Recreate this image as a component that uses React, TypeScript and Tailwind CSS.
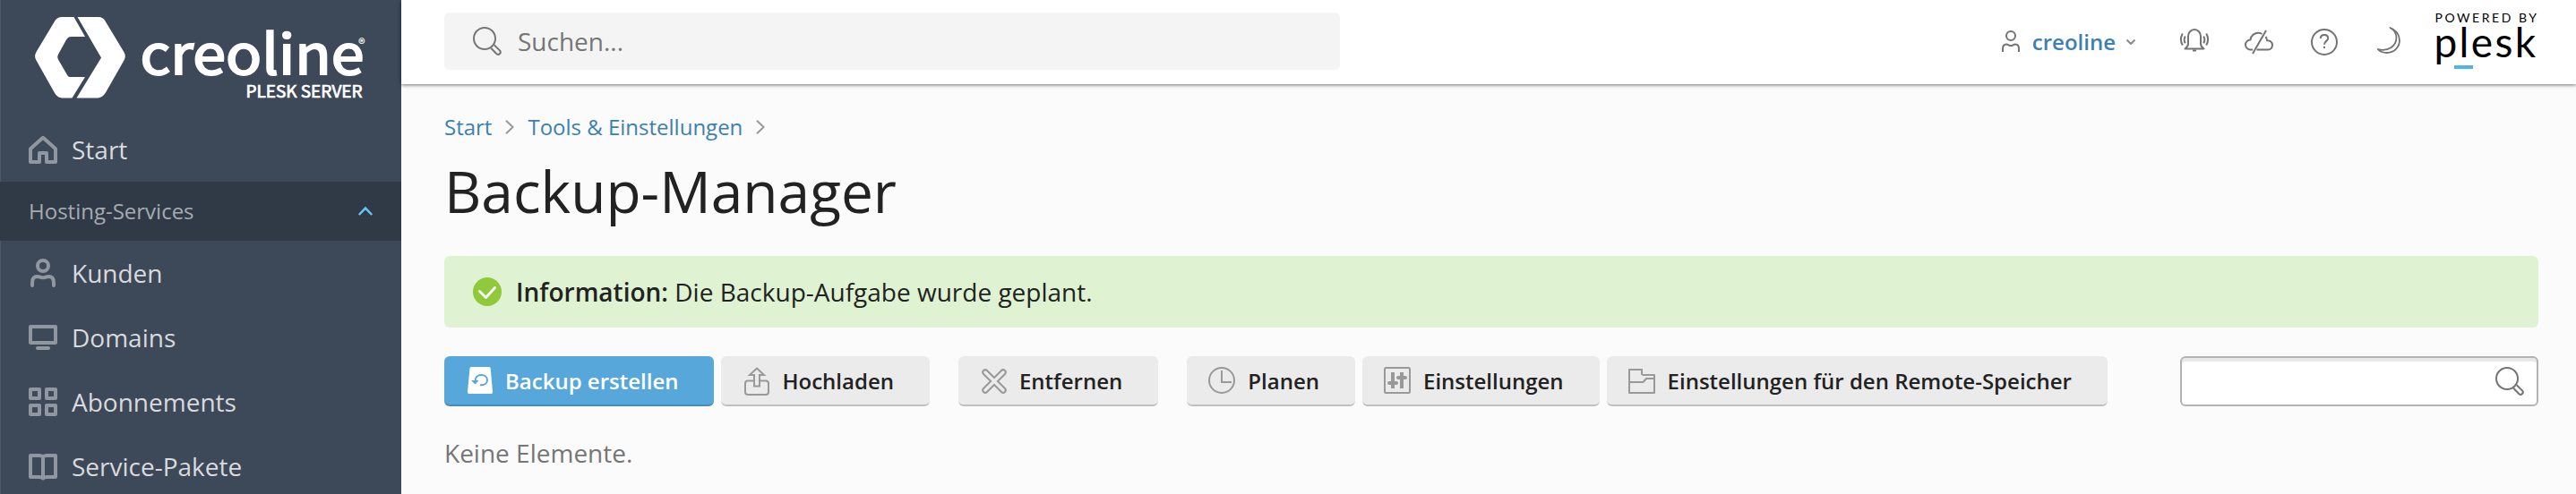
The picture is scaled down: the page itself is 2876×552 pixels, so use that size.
import { ReactNode } from "react";

interface IconProps {
  children: ReactNode;
  className?: string;
  width?: number;
  height?: number;
  strokeWidth?: number;
}

function Icon({
  children,
  className = "",
  width = 32,
  height = 32,
  strokeWidth = 2,
}: IconProps) {
  return (
    <svg
      width={width}
      height={height}
      viewBox={`0 0 ${width} ${height}`}
      className={`shrink-0 overflow-visible ${className}`}
      fill="none"
      stroke="currentColor"
      strokeWidth={strokeWidth}
      strokeLinejoin="round"
    >
      {children}
    </svg>
  );
}

const homeIcon = <path d="M2 15.2L16 2.8L30 15.2V30H20V20H12V30H2Z" />;

const customersIcon = (
  <>
    <circle cx="16" cy="8" r="6" />
    <path
      d="M4 30V27C4 22.5 6 20 9.5 20C12.5 20 13 21.3 16 21.3C19 21.3 19.5 20 22.5 20C26 20 28 22.5 28 27V30"
      strokeLinecap="round"
    />
  </>
);

const domainsIcon = (
  <>
    <rect x="2" y="4" width="28" height="18" />
    <path d="M10 28H22" strokeLinecap="round" />
  </>
);

const subscriptionsIcon = (
  <>
    <rect x="2" y="2" width="10" height="10" />
    <rect x="20" y="2" width="10" height="10" />
    <rect x="2" y="20" width="10" height="10" />
    <rect x="20" y="20" width="10" height="10" />
  </>
);

const plansIcon = (
  <path d="M16 5.5C14.5 4.4 13.5 4 12 4H2V28H12C13.5 28 14.5 28.5 16 29.5C17.5 28.5 18.5 28 20 28H30V4H20C18.5 4 17.5 4.4 16 5.5ZM16 6V29" />
);

const searchIcon = (
  <>
    <circle cx="13" cy="13" r="12" />
    <path d="M23.7 20.3L30.2 26.6A2.6 2.6 0 0 1 26.5 30.2L20.2 23.8" />
  </>
);

const services = [
  { label: "Kunden", icon: customersIcon },
  { label: "Domains", icon: domainsIcon },
  { label: "Abonnements", icon: subscriptionsIcon },
  { label: "Service-Pakete", icon: plansIcon },
];

function NavItem({ label, icon }: { label: string; icon: ReactNode }) {
  return (
    <a className="flex h-[72px] items-center gap-4 pl-8 text-[28px] text-[#d8dadd]">
      <Icon className="text-[#9097a1]" strokeWidth={4}>
        {icon}
      </Icon>
      <span>{label}</span>
    </a>
  );
}

function CreolineLogo() {
  return (
    <svg
      width="448"
      height="131"
      viewBox="0 0 448 131"
      className="block font-['Noto_Sans_CJK_SC',sans-serif]"
      fill="#fff"
    >
      <path d="M82.5 19H69C65.5 19 63 20.5 61.2 23.5L40.5 58C38.6 61.2 38.6 64.3 40.5 67.5L60.5 103C63 107.5 66 109.5 70.5 109.5H80.5L95 86H78.5C77 86 76 85.4 75.3 84.2L65 66.5C64 64.6 64 62.6 65 60.8L74 44.5C75.5 42 77 41 79.5 41H95Z" />
      <path d="M86.5 19H110C113.5 19 115.8 20.5 117.5 23.5L138.3 58C140.3 61.4 140.3 64.4 138.3 67.8L118.5 102.5C116 107 112.5 109.5 108 109.5H85.5L113 64.5Z" />
      <text
        x="156.5"
        y="82.5"
        className="text-[61.5px]"
        textLength="250"
        lengthAdjust="spacingAndGlyphs"
        stroke="#fff"
        strokeWidth="2"
      >
        creoline
      </text>
      <text x="400" y="54.5" className="text-[15px] font-bold">
        ®
      </text>
      <text
        x="274.5"
        y="109.3"
        className="text-[18px]"
        textLength="130"
        lengthAdjust="spacingAndGlyphs"
        stroke="#fff"
        strokeWidth=".7"
      >
        PLESK SERVER
      </text>
    </svg>
  );
}

function PleskLogo() {
  return (
    <svg
      width="118"
      height="94"
      viewBox="0 0 118 94"
      className="block font-[Lato,sans-serif]"
      fill="#000"
    >
      <text x="2.5" y="25" className="text-[14px]" textLength="113.5">
        POWERED BY
      </text>
      <text x="1.5" y="64" className="text-[46px]" textLength="113.5">
        plesk
      </text>
      <rect x="24" y="73" width="21" height="4" fill="#53b4e3" />
    </svg>
  );
}

function Sidebar() {
  return (
    <aside className="w-[448px] shrink-0 border-l border-[#4c5868] bg-[#3d4858]">
      <div className="-ml-px">
        <CreolineLogo />
        <NavItem label="Start" icon={homeIcon} />
        <div className="flex h-[66px] items-center justify-between bg-[#303a46] px-8 text-2xl text-[#a6abb1]">
          <span>Hosting-Services</span>
          <Icon className="text-[#6bc2fa]" width={16} height={10} strokeWidth={2.5}>
            <path d="M.8 9L8 1.6L15.2 9" strokeLinejoin="miter" />
          </Icon>
        </div>
        {services.map((item) => (
          <NavItem key={item.label} {...item} />
        ))}
      </div>
    </aside>
  );
}

function Header() {
  return (
    <header className="relative flex h-[94px] shrink-0 items-start bg-white pr-[42px] pl-12 shadow-[0_1px_4px_rgba(0,0,0,0.55)]">
      <div className="mt-[14px] flex h-16 w-[1000px] items-center gap-[18px] rounded-md bg-[#f4f4f4] pl-8 text-[28px] text-[#767676]">
        <Icon>{searchIcon}</Icon>
        <span>Suchen...</span>
      </div>
      <div className="ml-auto flex h-[94px] items-center text-[#737373]">
        <Icon width={20} height={24} className="mr-[14px] mb-0.5">
          <circle cx="10" cy="6" r="5" />
          <path d="M1 24V20.5C1 17.5 2.5 15.5 5 15.5C7.3 15.5 7.8 17 10 17C12.2 17 12.7 15.5 15 15.5C17.5 15.5 19 17.5 19 20.5V24" />
        </Icon>
        <span className="text-2xl font-semibold text-[#3c80b2]">creoline</span>
        <Icon width={10} height={6} className="ml-3 text-[#8a8a8a]">
          <path d="M.5.5L5 5L9.5.5" />
        </Icon>
        <Icon height={26} className="mr-10 mb-1 ml-[50px]">
          <path d="M9 17V8.5A7 7.5 0 0 1 23 8.5V17C23 19.5 24.5 21 26.5 22.5H5.5C7.5 21 9 19.5 9 17Z" />
          <path d="M14 24.5H18" />
          <path d="M5.8 8.5Q3.4 12.3 5.8 16.3M26.2 8.5Q28.6 12.3 26.2 16.3M2.8 5.5Q-1 12 2.8 18.5M29.2 5.5Q33 12 29.2 18.5" />
        </Icon>
        <Icon height={26} className="mr-[42px]">
          <path d="M9 21.5H6.5A5.5 5.5 0 0 1 6.5 10.5C7 5.5 11.5 2.5 16 2.8C17.5 2.9 18.5 3.3 19.5 4" />
          <path d="M23.5 7C24.5 8.2 25 9.5 25 11.2C28.5 11 31 13.2 31 16.3C31 19.3 29 21.5 26 21.5H13.5" />
          <path d="M24 0L9 26" />
        </Icon>
        <Icon width={30} height={30} className="mr-11">
          <circle cx="15" cy="15" r="14" />
          <path d="M10.8 11C10.8 8.5 12.5 7 15 7S19.2 8.6 19.2 10.8C19.2 14 15 13.8 15 17.8M15 19.8V22" />
        </Icon>
        <Icon width={26} height={30} strokeWidth={1.8} className="mr-9 mb-1">
          <path d="M14.5 1C21 3 25 8.8 25 15C25 22.8 18.8 29 11 29C6.5 29 3 27.5 .8 25C12 28 21.5 21.5 21.5 12C21.5 7.5 19 3.5 14.5 1Z" />
        </Icon>
        <PleskLogo />
      </div>
    </header>
  );
}

function Separator() {
  return (
    <Icon width={10} height={16} className="text-[#999]">
      <path d="M1 .8L8.6 8L1 15.2" />
    </Icon>
  );
}

function ToolButton({
  label,
  children,
  primary = false,
  className = "",
}: {
  label: string;
  children: ReactNode;
  primary?: boolean;
  className?: string;
}) {
  const colors = primary
    ? "border-[#4a8bb8] bg-[#58a7db] text-white"
    : "border-[#bfbfbf] bg-[#ebebeb] text-[#222]";

  return (
    <button
      className={`flex h-14 items-center gap-3 rounded-md border-b-2 pr-10 pl-6 text-2xl font-semibold whitespace-nowrap ${colors} ${className}`}
    >
      <Icon className={primary ? "mb-[-2px] text-white" : "mb-[-2px] text-[#999]"}>
        {children}
      </Icon>
      <span className="pt-[2px]">{label}</span>
    </button>
  );
}

function Toolbar() {
  return (
    <div className="mt-8 flex">
      <ToolButton label="Backup erstellen" primary>
        <path
          d="M6 0H26.2Q27.6 0 27.7 1.5L30 28Q30 30 28.5 30H3.5Q2 30 2 28L4.5 1.5Q4.6 0 6 0Z"
          fill="currentColor"
          stroke="none"
        />
        <path
          d="M10.5 15.5C10.5 11.5 13.5 9 17.3 9C21.3 9 24 11.5 24 14.7C24 18 21.3 20.3 17.3 20.3H16"
          stroke="#58a7db"
        />
        <path d="M6 15H14.5L10.5 19.5Z" fill="#58a7db" stroke="none" />
      </ToolButton>
      <ToolButton label="Hochladen" className="ml-2">
        <path d="M13 15.5H6A3 3 0 0 0 3 18.5V28A3 3 0 0 0 6 31H26A3 3 0 0 0 29 28V18.5A3 3 0 0 0 26 15.5H19" />
        <path d="M16 1.5L24 9H19V21.5H13V9H8Z" strokeLinejoin="miter" />
      </ToolButton>
      <ToolButton label="Entfernen" className="ml-8">
        <path
          d="M6 6L26 26M26 6L6 26"
          strokeWidth={7.5}
          strokeLinecap="round"
        />
        <path
          d="M6 6L26 26M26 6L6 26"
          stroke="#ebebeb"
          strokeWidth={3.5}
          strokeLinecap="round"
        />
      </ToolButton>
      <ToolButton label="Planen" className="ml-8">
        <circle cx="15" cy="15" r="14" />
        <path d="M15 4V17H26" strokeLinejoin="miter" />
      </ToolButton>
      <ToolButton label="Einstellungen" className="ml-2">
        <rect x="1" y="1" width="28" height="28" rx="1.5" />
        <path d="M10 6V24M20 6V24" strokeWidth={4} />
        <path d="M6 18H14M16 12H24" strokeWidth={4} strokeLinecap="round" />
      </ToolButton>
      <ToolButton label="Einstellungen für den Remote-Speicher" className="ml-2">
        <path d="M1 3H15V8L16.5 9H29V29H1Z" />
        <path d="M1 17H16.5L20 13H29" />
      </ToolButton>
      <div className="ml-auto flex h-14 w-[400px] items-center justify-end rounded-md border-2 border-[#b3b3b3] bg-white pr-[14px] text-[#737373] shadow-[inset_0_4px_1px_#e8e8e8]">
        <Icon>{searchIcon}</Icon>
      </div>
    </div>
  );
}

function App() {
  return (
    <div className="flex h-[552px] overflow-hidden bg-[#fbfbfb] font-['Open_Sans',sans-serif] leading-none text-[#222]">
      <Sidebar />
      <div className="flex min-w-0 flex-1 flex-col">
        <Header />
        <main className="pr-[42px] pl-12">
          <nav className="mt-8 flex h-8 items-center gap-[15px] text-2xl text-[#3c80b2]">
            <a>Start</a>
            <Separator />
            <a>Tools &amp; Einstellungen</a>
            <Separator />
          </nav>
          <h1 className="mt-4 h-28 text-[64px] leading-[80px]">
            Backup-Manager
          </h1>
          <div className="flex h-20 items-center gap-4 rounded-md bg-[#dff3d3] pl-8 text-[28px]">
            <Icon className="text-[#90c93a]">
              <circle cx="16" cy="16" r="16" fill="currentColor" stroke="none" />
              <path
                d="M7.5 15.5L14.5 22.5L24.5 11.5"
                stroke="#fff"
                strokeWidth={2.8}
                strokeLinecap="round"
              />
            </Icon>
            <p>
              <b className="font-semibold">Information:</b> Die Backup-Aufgabe
              wurde geplant.
            </p>
          </div>
          <Toolbar />
          <p className="mt-[38px] text-[28px] text-[#767676]">Keine Elemente.</p>
        </main>
      </div>
    </div>
  );
}

export default App;
